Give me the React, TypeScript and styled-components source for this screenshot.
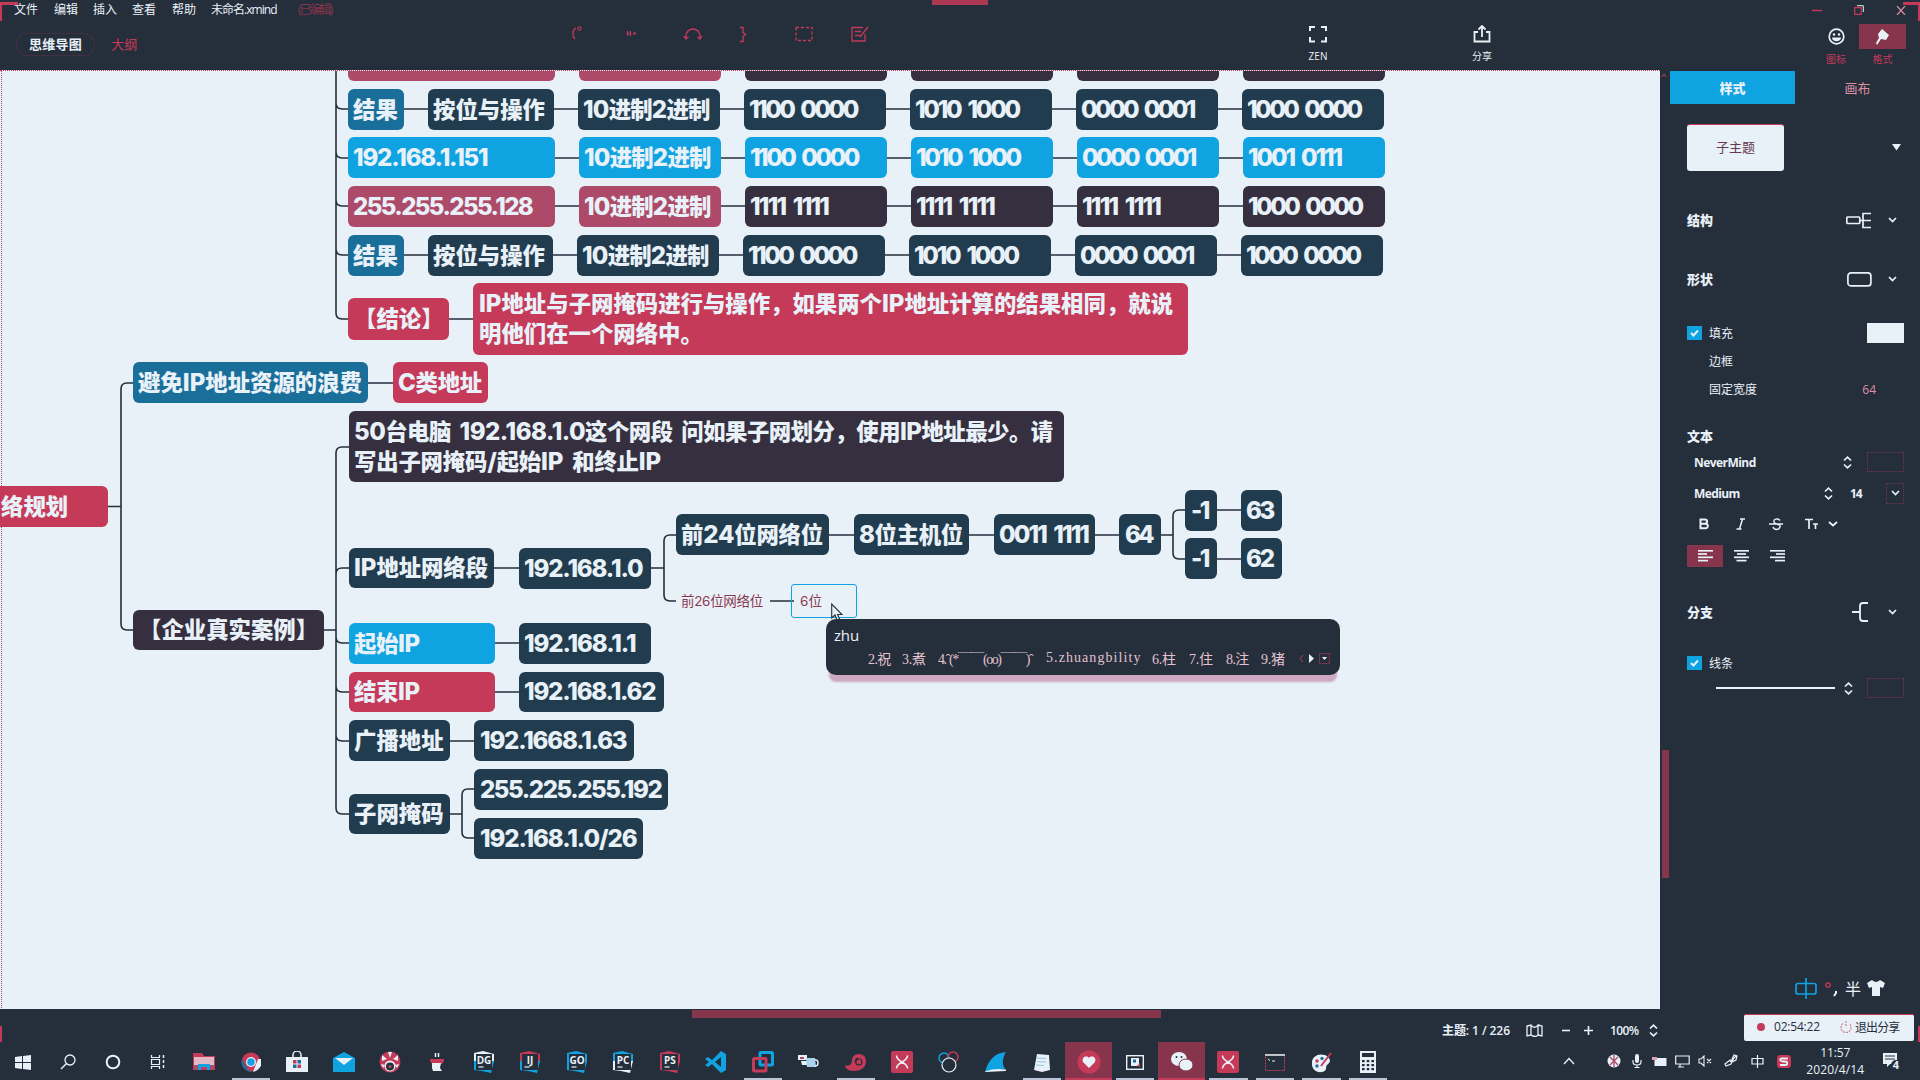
import React, { useLayoutEffect, useRef, useState } from 'react';
import styled, { createGlobalStyle } from 'styled-components';

const C = {
  dark: '#252e3b',
  light: '#e9f1f8',
  pink: '#c53a58',
  blue: '#0fa3e2',
  navy: '#223c4f',
  plum: '#362f3f',
  teal: '#1a6f9a',
  rose: '#ad4a69',
  wine: '#87354c',
};

const Global = createGlobalStyle`
  * { box-sizing: border-box; }
  html, body { margin: 0; padding: 0; background: ${C.dark}; overflow: hidden; }
  body { font-family: "Open Sans", "Noto Sans CJK SC", sans-serif; color: ${C.light}; font-size: 12px; }
  svg { display: block; flex: none; }
`;

/* ---------- text that is tracked to fill a given width ---------- */

const FitSpan = styled.span`
  display: inline-block;
  white-space: pre;
  flex: none;
`;

function Fit({ w, children }: { w?: number; children: React.ReactNode }) {
  const ref = useRef<HTMLSpanElement>(null);
  const [ls, setLs] = useState<number | undefined>(undefined);
  useLayoutEffect(() => {
    const el = ref.current;
    if (!el || !w) return;
    el.style.letterSpacing = '0px';
    const n = (el.textContent || ' ').length;
    setLs((w - el.getBoundingClientRect().width) / Math.max(1, n - 0.5));
  }, [w]);
  return (
    <FitSpan ref={ref} style={ls === undefined ? undefined : { letterSpacing: `${ls}px` }}>
      {children}
    </FitSpan>
  );
}

/* ---------- page frame ---------- */

const Page = styled.div`
  position: relative;
  width: 1920px;
  height: 1080px;
  background: ${C.dark};
  display: flex;
  flex-direction: column;
  overflow: hidden;
`;
const Corner = styled.div<{ $side: 'left' | 'right'; $top: number; $w: number; $h: number }>`
  position: absolute;
  ${p => p.$side}: 0;
  top: ${p => p.$top}px;
  width: ${p => p.$w}px;
  height: ${p => p.$h}px;
  background: ${C.pink};
`;
const ShareTab = styled.div`
  position: absolute;
  left: 932px;
  top: 0;
  width: 56px;
  height: 5px;
  background: ${C.pink};
  opacity: 0.85;
`;

/* ---------- header ---------- */

const MenuRow = styled.div`
  height: 20px;
  display: flex;
  align-items: center;
  padding-left: 14px;
  line-height: 20px;
`;
const MenuItem = styled.div<{ $w: number; $pink?: boolean }>`
  width: ${p => p.$w}px;
  color: ${p => (p.$pink ? C.pink : C.light)};
  opacity: ${p => (p.$pink ? 0.6 : 1)};
`;
const WinButtons = styled.div`
  margin-left: auto;
  display: flex;
  align-items: center;
  gap: 32px;
  padding-right: 14px;
`;
const ToolRow = styled.div`
  height: 50px;
  display: flex;
  align-items: stretch;
`;
const ViewTabs = styled.div`
  width: 544px;
  padding: 13px 0 0 16px;
  display: flex;
  align-items: flex-start;
`;
const ViewTab = styled.div<{ $on?: boolean }>`
  height: 23px;
  line-height: 20px;
  font-size: 13px;
  font-weight: ${p => (p.$on ? 600 : 400)};
  color: ${p => (p.$on ? C.light : C.pink)};
  padding: 0 12px;
  border-radius: 12px;
  border: 1px dotted ${p => (p.$on ? 'rgba(197,58,88,.4)' : 'transparent')};
  margin-right: 3px;
`;
const Tool = styled.div<{ $w: number }>`
  width: ${p => p.$w}px;
  display: flex;
  flex-direction: column;
  align-items: center;
  padding-top: 5px;
  color: ${C.pink};
`;
const ToolLabel = styled.div<{ $pink?: boolean }>`
  font-size: 10px;
  line-height: 14px;
  margin-top: 6px;
  color: ${p => (p.$pink ? C.pink : C.light)};
`;
const Space = styled.div<{ $w: number }>`
  width: ${p => p.$w}px;
  flex: none;
`;
const Mark = styled.div<{ $on?: boolean }>`
  width: 47px;
  height: 25px;
  margin-top: -1px;
  display: flex;
  align-items: center;
  justify-content: center;
  background: ${p => (p.$on ? C.wine : 'transparent')};
  color: ${C.light};
`;
const MarkLabel = styled(ToolLabel)`
  margin-top: 3px;
`;

/* ---------- body ---------- */

const Body = styled.div`
  height: 972px;
  display: flex;
`;
const Left = styled.div`
  width: 1660px;
  display: flex;
  flex-direction: column;
`;
const Canvas = styled.div`
  position: relative;
  height: 939px;
  background: ${C.light};
  overflow: hidden;
  border-top: 1px dotted ${C.pink};
`;
const Sheet = styled.div`
  position: absolute;
  left: 0;
  top: -71px;
  width: 1660px;
  height: 1010px;
`;
const Links = styled.svg`
  position: absolute;
  left: 0;
  top: 0;
`;
const Edge = styled.div`
  position: absolute;
  left: 1px;
  top: 70px;
  bottom: 0;
  border-left: 1px dotted ${C.rose};
`;
const Topic = styled.div<{ $x: number; $y: number; $w: number; $h: number; $bg: string; $pad: number }>`
  position: absolute;
  left: ${p => p.$x}px;
  top: ${p => p.$y}px;
  width: ${p => p.$w}px;
  height: ${p => p.$h}px;
  padding: 0 0 0 ${p => p.$pad}px;
  border-radius: 6px;
  background: ${p => p.$bg};
  color: ${C.light};
  font-weight: 900;
  font-size: 22.4px;
  line-height: 30px;
  display: flex;
  flex-direction: column;
  justify-content: center;
  align-items: flex-start;
  font-family: Inter, "Noto Sans CJK SC", sans-serif;
`;
const Latin = styled.span`
  font-size: 24px;
  line-height: 1;
  font-weight: 800;
  word-spacing: 4px;
`;
const PlainTopic = styled.div<{ $x: number; $y: number; $w: number; $sel?: boolean }>`
  position: absolute;
  left: ${p => p.$x}px;
  top: ${p => p.$y}px;
  width: ${p => p.$w}px;
  height: 34px;
  padding-left: ${p => (p.$sel ? 8 : 5)}px;
  line-height: 32px;
  border: 1px solid ${p => (p.$sel ? C.blue : 'transparent')};
  border-radius: 3px;
  font-size: 13.5px;
  color: #8a3850;
  font-family: Inter, "Noto Sans CJK SC", sans-serif;
`;
const Cursor = styled.svg`
  position: absolute;
  left: 831px;
  top: 603px;
`;

/* ---------- input method popup ---------- */

const Ime = styled.div`
  position: absolute;
  left: 826px;
  top: 619px;
  width: 514px;
  height: 56px;
  border-radius: 10px;
  background: ${C.dark};
  box-shadow: 0 10px 2px -3px rgba(170, 80, 125, 0.45);
  padding: 5px 8px 0;
`;
const Typed = styled.div`
  font-size: 15px;
  font-weight: 500;
  line-height: 22px;
`;
const Candidates = styled.div`
  display: flex;
  align-items: center;
  height: 24px;
  font-family: "Liberation Serif", "Noto Sans CJK SC", serif;
  font-size: 14px;
  color: #e3c3cf;
`;
const Cand = styled.div<{ $w: number }>`
  width: ${p => p.$w}px;
  flex: none;
  white-space: nowrap;
`;

/* ---------- status bar ---------- */

const Status = styled.div`
  height: 33px;
  display: flex;
  flex-direction: column;
`;
const HThumb = styled.div`
  width: 469px;
  height: 8px;
  margin: 1px 0 0 692px;
  background: ${C.wine};
`;
const StatusLine = styled.div`
  display: flex;
  align-items: center;
  height: 24px;
  padding-left: 1442px;
  font-size: 12px;
  font-weight: 600;
`;
const VScroll = styled.div`
  width: 10px;
  padding: 3px 0 0 1px;
  color: ${C.pink};
`;
const VThumb = styled.div`
  width: 7px;
  height: 128px;
  margin: 672px 0 0 1px;
  background: ${C.wine};
`;

/* ---------- sidebar ---------- */

const Side = styled.div`
  width: 250px;
  padding-top: 1px;
  display: flex;
  flex-direction: column;
`;
const SideTabs = styled.div`
  display: flex;
  height: 33px;
`;
const SideTab = styled.div<{ $on?: boolean }>`
  width: 125px;
  line-height: 34px;
  text-align: center;
  font-size: 13px;
  font-weight: ${p => (p.$on ? 800 : 400)};
  background: ${p => (p.$on ? C.blue : 'transparent')};
  color: ${p => (p.$on ? C.light : '#dd8fa2')};
`;
const Row = styled.div<{ $h: number; $mt?: number }>`
  height: ${p => p.$h}px;
  margin-top: ${p => p.$mt || 0}px;
  padding: 0 16px 0 17px;
  display: flex;
  align-items: center;
  flex: none;
`;
const Preset = styled.div`
  width: 97px;
  height: 47px;
  border-radius: 3px;
  background: ${C.light};
  border-top: 1px solid ${C.pink};
  color: #66384c;
  font-size: 13px;
  line-height: 44px;
  text-align: center;
`;
const Head = styled.div`
  font-size: 13px;
  font-weight: 800;
  width: 159px;
  margin-top: -2px;
`;
const Check = styled.div<{ $on?: boolean }>`
  width: 15px;
  height: 14px;
  margin-right: 7px;
  background: ${p => (p.$on ? C.blue : 'transparent')};
  display: flex;
  align-items: center;
  justify-content: center;
`;
const Swatch = styled.div<{ $w: number; $h: number; $fill?: boolean }>`
  width: ${p => p.$w}px;
  height: ${p => p.$h}px;
  margin-left: auto;
  background: ${p => (p.$fill ? C.light : 'transparent')};
  border: 1px dotted ${p => (p.$fill ? C.light : 'rgba(197,58,88,.55)')};
  display: flex;
  align-items: center;
  justify-content: center;
`;
const FontName = styled.div<{ $w: number }>`
  width: ${p => p.$w}px;
  margin-left: 7px;
  font-weight: 700;
  font-size: 12px;
`;
const Value = styled.div`
  color: #dd8fa2;
  margin-left: auto;
  margin-right: 28px;
`;
const AlignBox = styled.div<{ $on?: boolean }>`
  width: 36px;
  height: 22px;
  display: flex;
  align-items: center;
  justify-content: center;
  background: ${p => (p.$on ? C.wine : 'transparent')};
`;
const Stroke = styled.div`
  width: 119px;
  height: 2px;
  margin: 0 9px 0 29px;
  background: ${C.light};
`;
const ImeBar = styled.div`
  margin-top: 274px;
  height: 32px;
  padding-left: 125px;
  display: flex;
  align-items: center;
  font-size: 16px;
`;
const ShareBox = styled.div`
  width: 170px;
  height: 27px;
  margin: 10px 0 0 74px;
  background: ${C.light};
  border-top: 1px solid ${C.pink};
  border-radius: 2px;
  color: ${C.dark};
  display: flex;
  align-items: center;
  padding: 0 0 3px 13px;
  font-size: 12px;
`;
const Dot = styled.div`
  width: 8px;
  height: 8px;
  border-radius: 50%;
  background: ${C.pink};
  margin-right: 9px;
`;

/* ---------- taskbar ---------- */

const Taskbar = styled.div`
  height: 38px;
  display: flex;
`;
const Slot = styled.div<{ $w: number; $on?: boolean; $line?: boolean }>`
  width: ${p => p.$w}px;
  height: 38px;
  flex: none;
  display: flex;
  align-items: center;
  justify-content: center;
  position: relative;
  padding-top: 2px;
  background: ${p => (p.$on ? C.wine : 'transparent')};
  &::after {
    content: '';
    position: absolute;
    left: ${p => (p.$on ? 0 : 4)}px;
    right: ${p => (p.$on ? 0 : 4)}px;
    bottom: 0;
    height: 2px;
    background: ${p => (p.$on ? C.pink : p.$line ? '#b9c4d6' : 'transparent')};
  }
`;
const Tray = styled.div`
  display: flex;
  align-items: center;
  margin-left: 167px;
`;
const TrayCell = styled.div<{ $w: number }>`
  width: ${p => p.$w}px;
  display: flex;
  justify-content: center;
`;
const Clock = styled.div`
  width: 74px;
  text-align: center;
  line-height: 17px;
  font-size: 12px;
`;

/* ---------- small drawings ---------- */

const P = (p: { d: string; w?: number; c?: string; f?: string; dash?: string }) => (
  <path d={p.d} fill={p.f || 'none'} stroke={p.c || 'currentColor'} strokeWidth={p.w ?? 1.5} strokeDasharray={p.dash} />
);
const Svg = ({ w, h, children }: { w: number; h: number; children: React.ReactNode }) => (
  <svg width={w} height={h} viewBox={`0 0 ${w} ${h}`}>{children}</svg>
);
const Chevron = () => <Svg w={9} h={6}><P d="M1 1l3.500 3.500L8 1" w={1.700} /></Svg>;
const UpDown = () => <Svg w={9} h={13}><P d="M1 4.500L4.500 1.200 8 4.500M1 8.500l3.500 3.300L8 8.500" w={1.700} /></Svg>;
const Tick = () => <Svg w={9} h={8}><P d="M1 4l2.500 2.500L8 1.500" w={2} c={C.light} /></Svg>;
const AlignIcon = ({ k }: { k: number }) => (
  <Svg w={15} h={12}>
    {[[15, 0.8], [9, 4], [15, 7.3], [10, 10.6]].map(([len, y], i) => {
      const x = k === 0 ? 0 : k === 1 ? (15 - len) / 2 : 15 - len;
      return <P key={i} d={`M${x} ${y}h${len}`} c={C.light} w={1.700} />;
    })}
  </Svg>
);
const JetBrains = ({ t, a, b }: { t: string; a: string; b: string }) => (
  <Svg w={22} h={22}>
    <path d="M1 2l9-2 11 3v8H1z" fill={a} />
    <path d="M1 10h20l-3 12-9-2-8-1z" fill={b} />
    <rect x="3" y="3" width="16" height="16" fill={C.dark} />
    <text x="11" y="12.500" fontSize="10" fontWeight="700" textAnchor="middle" fill={C.light} fontFamily="Open Sans, sans-serif">{t}</text>
    <path d="M5.500 16h5" stroke={C.light} strokeWidth="1.200" />
  </Svg>
);
const XTile = () => (
  <Svg w={22} h={22}><rect width="22" height="22" rx="2" fill={C.pink} /><P d="M5.500 4.500q0 3.500 5.500 6.500 5.500-3 5.500-6.500M5.500 17.500q0-3.500 5.500-6.500 5.500 3 5.500 6.500" c={C.light} w={1.600} /></Svg>
);

const PITCH = 46.55;
type TaskIcon = { w: number; on?: boolean; line?: boolean; icon: React.ReactNode };
const tasks: TaskIcon[] = [
  { w: 45, icon: <Svg w={16} h={15}><path d="M0 2l7-1v6H0zM8 1l8-1v7H8zM0 8h7v6l-7-1zM8 8h8v7l-8-1z" fill={C.light} /></Svg> },
  { w: 45, icon: <Svg w={16} h={16}><circle cx="10" cy="6" r="5" fill="none" stroke={C.light} strokeWidth="1.300" /><P d="M6.500 9.500L1 15" c={C.light} /></Svg> },
  { w: 45, icon: <Svg w={16} h={16}><circle cx="8" cy="8" r="6.300" fill="none" stroke={C.light} strokeWidth="2" /></Svg> },
  { w: 46, icon: <Svg w={16} h={16}><P d="M1.500 1v2.500h8V1M1.500 5.500h8v5h-8zM1.500 15v-2.500h8V15" c={C.light} w={1.200} /><P d="M13.500 1v14" c={C.light} dash="3 2" /></Svg> },
  { w: PITCH, icon: <Svg w={22} h={18}><path d="M0 0h9l2 3h11v14H0z" fill={C.pink} /><path d="M1 4h20v8H1z" fill="#e0b8c6" /><path d="M1 12h4v5H1zM17 12h4v5h-4z" fill={C.rose} /><path d="M5 17v-6h12v6h-3v-3H8v3z" fill={C.blue} /></Svg> },
  { w: PITCH, line: true, icon: <Svg w={20} h={20}><circle cx="10" cy="10" r="9.500" fill={C.pink} /><path d="M1 7l6 11 4 2A10 10 0 0 1 1 7z" fill={C.teal} /><path d="M12 20l5-13h3a10 10 0 0 1-8 13z" fill={C.light} /><circle cx="10" cy="10" r="5" fill={C.light} /><circle cx="10" cy="10" r="3.700" fill={C.blue} /></Svg> },
  { w: PITCH, icon: <Svg w={22} h={22}><path d="M0 6h22v15H0z" fill={C.light} /><P d="M7 6V4a4 4 0 0 1 8 0v2" c={C.light} /><path d="M7 9h3.500v3.500H7zM11.500 13.500H15V17h-3.500z" fill={C.pink} /><path d="M11.500 9H15v3.500h-3.500zM7 13.500h3.500V17H7z" fill={C.teal} /></Svg> },
  { w: PITCH, icon: <Svg w={22} h={21}><path d="M0 6l11-6 11 6v14H0z" fill={C.blue} /><path d="M2 6h18l-9 7z" fill={C.light} /></Svg> },
  { w: PITCH, icon: <Svg w={22} h={22}><circle cx="11" cy="11" r="10.500" fill={C.pink} /><path d="M3 4l5 4-5 2zM19 4l-5 4 5 2zM9 1l2 6 2-6zM2 13l4 1-2 3zM20 13l-4 1 2 3z" fill={C.light} /><circle cx="11" cy="15" r="5.500" fill={C.light} /><circle cx="11" cy="15.500" r="4" fill={C.dark} /><circle cx="11" cy="15.500" r="1.500" fill={C.rose} /></Svg> },
  { w: PITCH, icon: <Svg w={16} h={20}><P d="M6.500 1v4M9.500 1v4" c={C.light} w={1.500} /><path d="M1 7h14v2l-2 3H3L1 9z" fill={C.pink} /><path d="M3 11h9l-1 5 2 3H4l-1-3z" fill={C.light} /></Svg> },
  { w: PITCH, icon: <JetBrains t="DG" a={C.light} b={C.blue} /> },
  { w: PITCH, icon: <JetBrains t="IJ" a={C.pink} b={C.blue} /> },
  { w: PITCH, icon: <JetBrains t="GO" a={C.blue} b={C.blue} /> },
  { w: PITCH, icon: <JetBrains t="PC" a={C.blue} b={C.light} /> },
  { w: PITCH, icon: <JetBrains t="PS" a={C.pink} b={C.pink} /> },
  { w: PITCH, icon: <Svg w={22} h={22}><path d="M16 0l5 3v16l-5 3L7 13l-4 3-3-2 4-3-4-3 3-2 4 3zM16 6l-6 5 6 5z" fill={C.blue} fillRule="evenodd" /></Svg> },
  { w: PITCH, line: true, icon: <Svg w={22} h={22}><rect x="8" y="1.500" width="12.500" height="12.500" rx="1" fill="none" stroke={C.blue} strokeWidth="3" /><rect x="1.500" y="7.500" width="12.500" height="12.500" rx="1" fill="none" stroke={C.pink} strokeWidth="3" /></Svg> },
  { w: PITCH, icon: <Svg w={22} h={14}><path d="M0 0h9v5H0zM3 6h6v4H4z" fill={C.light} /><path d="M8 3h9l1 9H9z" fill="#a9d4ef" /><P d="M17 5c4-1 4 6 0 6" c={C.light} /><path d="M2 2h4v2H2z" fill={C.rose} /></Svg> },
  { w: PITCH, line: true, icon: <Svg w={22} h={19}><path d="M0 12c4 2 7-1 7-5a7 6 0 0 1 13-3c3 7-1 14-11 14-6 0-9-3-9-6z" fill={C.pink} /><P d="M11 9a3 3 0 1 1 3 3c-4 0-5-6-1-7" c={C.dark} w={1.200} /></Svg> },
  { w: PITCH, icon: <XTile /> },
  { w: PITCH, icon: <Svg w={22} h={22}><circle cx="6" cy="7" r="5" fill="none" stroke={C.blue} strokeWidth="1.500" /><circle cx="15" cy="6" r="5" fill="none" stroke={C.pink} strokeWidth="1.500" /><circle cx="11" cy="14" r="7" fill={C.dark} stroke={C.light} strokeWidth="1.200" /></Svg> },
  { w: PITCH, icon: <Svg w={22} h={20}><path d="M0 20C3 8 10 1 21 0c-4 6-4 13-1 17z" fill={C.blue} /><path d="M0 19.500c7-3 14-3 21-2v1.500l-21 1z" fill={C.light} /></Svg> },
  { w: PITCH, line: true, icon: <Svg w={18} h={19}><path d="M4 1l12 1 1 15-8 2-8-2z" fill={C.light} /><P d="M4 5l9 .5M4 8.500l9 .5M3 12l8 .5" c="#8fc8e8" w={1.200} /></Svg> },
  { w: PITCH, on: true, icon: <Svg w={24} h={24}><circle cx="12" cy="12" r="11.500" fill={C.pink} /><path d="M12 18l-6-6c-2-5 4-7 6-4 2-3 8-1 6 4z" fill={C.light} /></Svg> },
  { w: PITCH, line: true, icon: <Svg w={18} h={15}><rect x=".7" y=".7" width="16.600" height="13.600" fill="none" stroke={C.light} strokeWidth="1.400" /><path d="M5 3h8v8H5z" fill={C.light} /><path d="M7 4.500h3v3H7z" fill={C.teal} /><path d="M11 11l3-3v4z" fill={C.pink} /></Svg> },
  { w: PITCH, on: true, icon: <Svg w={22} h={20}><ellipse cx="8" cy="7" rx="8" ry="7" fill={C.light} /><ellipse cx="15" cy="13" rx="7" ry="6" fill={C.light} stroke={C.wine} /><circle cx="5.500" cy="5" r="1" fill={C.dark} /><circle cx="10.500" cy="5" r="1" fill={C.dark} /></Svg> },
  { w: PITCH, line: true, icon: <XTile /> },
  { w: PITCH, line: true, icon: <Svg w={20} h={17}><rect x=".5" y=".5" width="19" height="16" fill="none" stroke={C.pink} strokeDasharray="2 1" /><P d="M0 1h20" c={C.light} /><P d="M3 5l2 1.500M7 7h3" c={C.light} w={1} /></Svg> },
  { w: PITCH, line: true, icon: <Svg w={21} h={21}><path d="M1 12C0 3 11 0 17 5c4 4 1 6-1 8s1 6-5 7S1 17 1 12z" fill={C.light} /><circle cx="6" cy="9" r="1.700" fill={C.pink} /><circle cx="11" cy="6.500" r="1.700" fill={C.teal} /><circle cx="6" cy="14" r="1.700" fill={C.teal} /><P d="M10 14L20 1" c={C.pink} w={2} /></Svg> },
  { w: PITCH, line: true, icon: <Svg w={16} h={22}><rect width="16" height="22" fill={C.light} /><path d="M2 2h12v4H2z" fill={C.dark} />{[9, 13, 17].map(y => [2, 6.7, 11.4].map(x => <rect key={`${x}-${y}`} x={x} y={y} width="2.600" height="2.200" fill={C.dark} />))}</Svg> },
];

/* ---------- mind map data ---------- */

type T = [x: number, y: number, w: number, h: number, bg: string, lines: [string, number?][], pad?: number];

const cells = (y: number, dx: number, bg: string, v: [string, number][]): T[] =>
  v.map(([t, w], i) => [744 + dx + i * 166, y, 142, 41, bg, [[t, w]], 5] as T);

const topics: T[] = [
  [348, 40, 207, 41, C.rose, []],
  [579, 40, 142, 41, C.rose, []],
  ...cells(40, 1, C.plum, [['', 0], ['', 0], ['', 0], ['', 0]]),
  [348, 89, 56, 41, C.teal, [['结果']], 5],
  [428, 89, 126, 41, C.navy, [['按位与操作']], 5],
  [578, 89, 142, 41, C.navy, [['10进制2进制', 127]], 5],
  ...cells(89, 0, C.navy, [['1100 0000', 109], ['1010 1000', 105], ['0000 0001', 114], ['1000 0000', 115]]),
  [348, 137, 207, 41, C.blue, [['192.168.1.151', 135]], 5],
  [579, 137, 142, 41, C.blue, [['10进制2进制', 127]], 5],
  ...cells(137, 1, C.blue, [['1100 0000', 109], ['1010 1000', 105], ['0000 0001', 114], ['1001 0111', 94]]),
  [348, 186, 207, 41, C.rose, [['255.255.255.128', 180]], 5],
  [579, 186, 142, 41, C.rose, [['10进制2进制', 127]], 5],
  ...cells(186, 1, C.plum, [['1111 1111', 79], ['1111 1111', 79], ['1111 1111', 79], ['1000 0000', 115]]),
  [348, 235, 56, 41, C.teal, [['结果']], 5],
  [428, 235, 125, 41, C.navy, [['按位与操作']], 5],
  [577, 235, 142, 41, C.navy, [['10进制2进制', 127]], 5],
  ...cells(235, -1, C.navy, [['1100 0000', 109], ['1010 1000', 105], ['0000 0001', 114], ['1000 0000', 115]]),
  [348, 298, 101, 42, C.pink, [['【结论】']]],
  [473, 283, 715, 72, C.pink, [['IP地址与子网掩码进行与操作，如果两个IP地址计算的结果相同，就说', 694], ['明他们在一个网络中。']]],
  [-60, 486, 168, 41, C.pink, [['络规划']], 61],
  [133, 362, 235, 41, C.teal, [['避免IP地址资源的浪费', 224]], 5],
  [393, 362, 95, 41, C.pink, [['C类地址', 84]], 5],
  [133, 610, 191, 40, C.plum, [['【企业真实案例】']]],
  [349, 411, 715, 71, C.plum, [['50台电脑 192.168.1.0这个网段 问如果子网划分，使用IP地址最少。请', 699], ['写出子网掩码/起始IP 和终止IP', 307]], 5],
  [349, 548, 145, 40, C.navy, [['IP地址网络段', 134]], 5],
  [519, 548, 132, 41, C.navy, [['192.168.1.0', 119]], 5],
  [676, 514, 153, 41, C.navy, [['前24位网络位', 142]], 5],
  [854, 514, 115, 41, C.navy, [['8位主机位', 104]], 5],
  [994, 514, 101, 41, C.navy, [['0011 1111', 90]], 5],
  [1119, 514, 42, 41, C.navy, [['64', 28]]],
  [1185, 490, 32, 41, C.navy, [['-1', 18]]],
  [1241, 490, 41, 41, C.navy, [['63', 28]], 5],
  [1185, 538, 32, 41, C.navy, [['-1', 18]]],
  [1241, 538, 41, 41, C.navy, [['62', 28]], 5],
  [349, 623, 146, 41, C.blue, [['起始IP', 66]], 5],
  [349, 672, 146, 40, C.pink, [['结束IP', 66]], 5],
  [349, 720, 101, 41, C.navy, [['广播地址']], 5],
  [349, 794, 101, 40, C.navy, [['子网掩码']], 5],
  [519, 623, 132, 41, C.navy, [['192.168.1.1', 112]], 5],
  [519, 672, 145, 40, C.navy, [['192.168.1.62', 132]], 5],
  [474, 720, 160, 41, C.navy, [['192.1668.1.63', 147]]],
  [474, 769, 194, 41, C.navy, [['255.225.255.192', 182]]],
  [474, 818, 169, 41, C.navy, [['192.168.1.0/26', 157]]],
];

const rich = (s: string) =>
  s.split(/([\x20-\x7e]+)/).filter(Boolean).map((part, i) => (/[\x20-\x7e]/.test(part) ? <Latin key={i}>{part}</Latin> : part));

const branch = (x: number, from: number, to: number, end: number) => {
  const r = to > from ? -6 : 6;
  return `M${x} ${from}V${to + r}Q${x} ${to} ${x + 6} ${to}H${end}`;
};
const rowLinks = [70, 109, 158, 206, 255].map((y, i) => {
  const start = i === 1 || i === 4 ? 404 : 555;
  return `M${start} ${y}H1245`;
}).join('');
const linkPath = [
  rowLinks,
  ...[109, 158, 206, 255, 319].map(y => branch(336, 70, y, 348)),
  'M449 319H473M108 506.500H121M368 383H393M324 630H336M494 568H519M651 568H664M829 535H1119M1161 535H1173M1217 510H1241M1217 559H1241',
  'M495 643H519M495 692H519M450 741H474M450 814H462M770 601H794',
  branch(121, 506, 383, 133), branch(121, 506, 630, 133),
  ...[447, 568, 643, 692, 741, 814].map(y => branch(336, 630, y, 349)),
  branch(664, 568, 535, 676), branch(664, 568, 601, 676),
  branch(1173, 535, 510, 1185), branch(1173, 535, 559, 1185),
  branch(462, 814, 789, 474), branch(462, 814, 838, 474),
].join('');

const candidates: [string, number, number][] = [
  ['2.祝', 23, 34], ['3.煮', 24, 36], ['4.ˆ(*￣￣(oo)￣￣)ˆ', 95, 108], ['5.zhuangbility', 95, 106],
  ['6.柱', 24, 37], ['7.住', 24, 37], ['8.注', 23, 35], ['9.猪', 24, 38],
];

const menu: [string, number][] = [['文件', 40], ['编辑', 39], ['插入', 39], ['查看', 40], ['帮助', 39]];

export default function App() {
  return (
    <Page>
      <Global />
      <MenuRow>
        {menu.map(([t, w]) => <MenuItem key={t} $w={w}>{t}</MenuItem>)}
        <MenuItem $w={87}><Fit w={66}>未命名.xmind</Fit></MenuItem>
        <MenuItem $w={60} $pink><Fit w={34}>(已编辑)</Fit></MenuItem>
        <WinButtons>
          <Svg w={10} h={10}><P d="M0 5.500h10" c={C.pink} /></Svg>
          <Svg w={10} h={10}><P d="M.7 2.700h6.500v6.600H.7z" c={C.pink} w={1.200} /><P d="M3 .7h6.300V7" c={C.light} w={1} /></Svg>
          <Svg w={10} h={9}><P d="M1 0l8 9M9 0L1 9" c="#dd8fa2" w={1.200} /></Svg>
        </WinButtons>
      </MenuRow>
      <ToolRow>
        <ViewTabs>
          <ViewTab $on><Fit w={53}>思维导图</Fit></ViewTab>
          <ViewTab>大纲</ViewTab>
        </ViewTabs>
        <Tool $w={68}><Svg w={18} h={18}><P d="M7 3c-4 2-4 8-1 11" w={1.300} /><P d="M9 2h3v3H9z" w={1} /></Svg></Tool>
        <Tool $w={40}><Svg w={18} h={18}><P d="M4.500 6v5M7.500 6v5M4.500 8.500h3M10 9.500l1.500-2 1.500 2" w={1.200} /></Svg></Tool>
        <Tool $w={82}><Svg w={20} h={18}><P d="M3 13V11a7 7 0 0 1 14 0v2M1 11l2 3 2.500-2M19 11l-2 3-2.500-2" w={1.300} /></Svg></Tool>
        <Tool $w={18}><Svg w={10} h={18}><P d="M2 2.500h3v5l2.500 2-2.500 2v5H2" w={1.300} /></Svg></Tool>
        <Tool $w={104}><Svg w={18} h={18}><P d="M1 2.500h16v13H1z" dash="3 2" w={1.300} /></Svg></Tool>
        <Tool $w={8}><Svg w={18} h={18}><P d="M12 2.500H1v13.500h13V9M4 6.500h6M4 10.500h5M9 12l8-10" w={1.300} /></Svg></Tool>
        <Space $w={424} />
        <Tool $w={60}>
          <Svg w={18} h={18}><P d="M1 6V2h5M12 2h5v4M17 12v4.500h-5M6 16.500H1V12" c={C.light} w={2} /></Svg>
          <ToolLabel><Fit w={19}>ZEN</Fit></ToolLabel>
        </Tool>
        <Space $w={104} />
        <Tool $w={60}>
          <Svg w={18} h={18}><P d="M5 7H1.500v9.500h15V7H13M9 12V1M5.500 4.500L9 1l3.500 3.500" c={C.light} w={1.800} /></Svg>
          <ToolLabel>分享</ToolLabel>
        </Tool>
        <Space $w={301} />
        <Tool $w={46}>
          <Mark><Svg w={17} h={17}><circle cx="8.500" cy="8.500" r="7.300" fill="none" stroke={C.light} strokeWidth="1.700" /><path d="M4 9.500h9c0 5-9 5-9 0z" fill={C.light} /><circle cx="6" cy="6.500" r="1.200" fill={C.light} /><circle cx="11" cy="6.500" r="1.200" fill={C.light} /></Svg></Mark>
          <MarkLabel $pink>图标</MarkLabel>
        </Tool>
        <Tool $w={47}>
          <Mark $on><Svg w={15} h={17}><path d="M7 1l7 6-3 5-5-1-4 6-1-2 3-5-1-4z" fill={C.light} /></Svg></Mark>
          <MarkLabel $pink>格式</MarkLabel>
        </Tool>
      </ToolRow>

      <Body>
        <Left>
          <Canvas>
            <Sheet>
              <Edge />
              <Links width="1660" height="1010"><path d={linkPath} fill="none" stroke={C.dark} strokeWidth="1.600" /></Links>
              {topics.map(([x, y, w, h, bg, lines, pad], i) => (
                <Topic key={i} $x={x} $y={y} $w={w} $h={h} $bg={bg} $pad={pad ?? 6}>
                  {lines.filter(l => l[0]).map(([t, tw]) => <Fit key={t} w={tw}>{rich(t)}</Fit>)}
                </Topic>
              ))}
              <PlainTopic $x={675} $y={584} $w={95}><Fit w={82}>前26位网络位</Fit></PlainTopic>
              <PlainTopic $x={791} $y={584} $w={66} $sel><Fit w={22}>6位</Fit></PlainTopic>
              <Cursor width="12" height="19" viewBox="0 0 12 19"><path d="M.7 1v14l3.300-3 2.500 6 2.500-1-2.500-5.500H11z" fill={C.light} stroke={C.dark} strokeWidth="1.100" /></Cursor>
              <Ime>
                <Typed><Fit w={25}>zhu</Fit></Typed>
                <Candidates>
                  <Space $w={34} />
                  {candidates.map(([t, w, cw]) => <Cand key={t} $w={cw}><Fit w={w}>{t}</Fit></Cand>)}
                  <Svg w={32} h={11}>
                    <P d="M4 2L1 5.500 4 9" c={C.pink} w={1} />
                    <path d="M10 1l5 4.500-5 4.500z" fill={C.light} />
                    <rect x="20.500" y=".5" width="10" height="10" fill="none" stroke={C.pink} strokeDasharray="1 1" />
                    <path d="M23 4h5l-2.500 3z" fill={C.light} />
                  </Svg>
                </Candidates>
              </Ime>
            </Sheet>
          </Canvas>
          <Status>
            <HThumb />
            <StatusLine>
              <Fit w={68}>主题: 1 / 226</Fit><Space $w={16} />
              <Svg w={17} h={13}><P d="M1 2l4-1v10l-4 1zM5 1c2 3 5 3 7 0v10c-2 3-5 1-7 0M12 1l4 1v10l-4-1" c={C.light} w={1.300} /></Svg><Space $w={19} />
              <Svg w={8} h={9}><P d="M0 4.500h8" c={C.light} w={1.600} /></Svg><Space $w={14} />
              <Svg w={9} h={9}><P d="M0 4.500h9M4.500 0v9" c={C.light} w={1.600} /></Svg><Space $w={17} />
              <Fit w={29}>100%</Fit><Space $w={10} /><UpDown />
            </StatusLine>
          </Status>
        </Left>
        <VScroll>
          <Svg w={6} h={5}><P d="M1 4l2-3 2 3" w={1} /></Svg>
          <VThumb />
        </VScroll>
        <Side>
          <SideTabs><SideTab $on>样式</SideTab><SideTab>画布</SideTab></SideTabs>
          <Row $h={87}><Preset><Fit w={39}>子主题</Fit></Preset><Space $w={108} /><Svg w={9} h={7}><path d="M0 0h9L4.500 6.500z" fill={C.light} /></Svg></Row>
          <Row $h={58}><Head>结构</Head>
            <Svg w={25} h={17}><rect x=".8" y="5" width="13" height="6.500" rx="1" fill="none" stroke={C.light} strokeWidth="1.700" /><P d="M14 8.500h11M25 1.500h-8v14h8" c={C.light} w={1.700} /></Svg>
            <Space $w={17} /><Chevron />
          </Row>
          <Row $h={60}><Head>形状</Head>
            <Space $w={1} /><Svg w={25} h={15}><rect x=".9" y=".9" width="23" height="13" rx="3" fill="none" stroke={C.light} strokeWidth="1.700" /></Svg>
            <Space $w={16} /><Chevron />
          </Row>
          <Row $h={28} $mt={10}><Check $on><Tick /></Check>填充<Swatch $w={37} $h={20} $fill /></Row>
          <Row $h={28}><Check />边框</Row>
          <Row $h={28}><Check />固定宽度<Value>64</Value></Row>
          <Row $h={28} $mt={19}><Head>文本</Head></Row>
          <Row $h={24}><FontName $w={149}><Fit w={62}>NeverMind</Fit></FontName><UpDown /><Swatch $w={37} $h={20} /></Row>
          <Row $h={28} $mt={5}>
            <FontName $w={130}><Fit w={46}>Medium</Fit></FontName><UpDown /><Space $w={10} /><FontName $w={14}><Fit w={12}>14</Fit></FontName>
            <Swatch $w={18} $h={21}><Chevron /></Swatch>
          </Row>
          <Row $h={28} $mt={3}>
            <Svg w={152} h={14}>
              <P d="M13.500 2.500h4.500a2.100 2.100 0 0 1 0 4.200H13.500zM13.500 6.700h5a2.300 2.300 0 0 1 0 4.600H13.500z" c={C.light} w={2} />
              <P d="M53 2h5M49.500 12h5M55.500 2l-3 10" c={C.light} />
              <P d="M93 3.500c-2-2.500-7-1.500-6 1.500s7 1.500 6 5-6 3-7 0M82 7h14" c={C.light} w={1.400} />
              <P d="M118 2.500h8M122 2.500V12M126 7h5M128.500 7v5" c={C.light} w={1.700} />
              <P d="M142 5l4 3.500 4-3.500" c={C.light} w={1.700} />
            </Svg>
          </Row>
          <Row $h={28} $mt={4}>{[0, 1, 2].map(k => <AlignBox key={k} $on={k === 0}><AlignIcon k={k} /></AlignBox>)}</Row>
          <Row $h={28} $mt={28}><Head>分支</Head>
            <Space $w={6} /><Svg w={16} h={20}><P d="M0 10h8M16 1h-5q-3 0-3 3v12q0 3 3 3h5" c={C.light} w={1.800} /></Svg>
            <Space $w={20} /><Chevron />
          </Row>
          <Row $h={28} $mt={23}><Check $on><Tick /></Check>线条</Row>
          <Row $h={20} $mt={1}><Stroke /><UpDown /><Swatch $w={37} $h={20} /></Row>
          <ImeBar>
            <Svg w={22} h={21}><rect x="1" y="5.500" width="20" height="10.500" rx="2" fill="none" stroke={C.blue} strokeWidth="1.700" /><P d="M11 0v21" c={C.blue} w={1.700} /></Svg>
            <Space $w={8} />
            <Svg w={13} h={17}><circle cx="3" cy="5" r="2.200" fill="none" stroke={C.pink} strokeWidth="1.300" /><P d="M11 11v2l-2 3" c={C.light} w={2} /></Svg>
            <Space $w={7} />半<Space $w={6} />
            <Svg w={18} h={16}><path d="M5 0q4 4 8 0l5 3-2 5-3-1v9H5V7L2 8 0 3z" fill={C.light} /></Svg>
          </ImeBar>
          <ShareBox>
            <Dot /><Fit w={46}>02:54:22</Fit><Space $w={20} />
            <Svg w={12} h={12}><P d="M3 2.500a5 5 0 1 0 6 0M6 0v6" c="#d27c90" w={1.200} dash="2 1" /></Svg>
            <Space $w={3} /><Fit w={45}>退出分享</Fit>
          </ShareBox>
        </Side>
      </Body>

      <Taskbar>
        {tasks.map((t, i) => <Slot key={i} $w={t.w} $on={t.on} $line={t.line}>{t.icon}</Slot>)}
        <Tray>
          <TrayCell $w={22}><Svg w={12} h={8}><P d="M1 7l5-5.500L11 7" c={C.light} w={1.300} /></Svg></TrayCell>
          <Space $w={23} />
          <TrayCell $w={22}><Svg w={14} h={14}><circle cx="7" cy="7" r="6.500" fill={C.light} /><P d="M3 3l8 8M11 3l-8 8M7 1v12" c={C.rose} w={1.300} /></Svg></TrayCell>
          <TrayCell $w={23}><Svg w={10} h={14}><rect x="3" width="4" height="9" rx="2" fill={C.light} /><P d="M1 6v2a4 3 0 0 0 8 0V6M5 11v3M2.500 13.500h5" c={C.light} w={1.200} /></Svg></TrayCell>
          <TrayCell $w={23}><Svg w={15} h={11}><rect x="3" y="2.500" width="11" height="7" fill={C.light} stroke={C.light} /><path d="M0 1h5v3H0z" fill="#d9a5b5" /></Svg></TrayCell>
          <TrayCell $w={23}><Svg w={15} h={13}><P d="M.7 1h13.500v8H.7zM3 12h6M5 9v3" c={C.light} w={1.200} /></Svg></TrayCell>
          <TrayCell $w={22}><Svg w={14} h={12}><P d="M1 4h2l3-3v10L3 8H1zM9 4l4 4M13 4L9 8" c={C.light} w={1.100} /></Svg></TrayCell>
          <TrayCell $w={30}><Svg w={14} h={14}><P d="M6 8l6-6M2 12l5-2 2-4-3 0-5 4zM8 5l2-4 3 1-1 4-4 2" c={C.light} w={1.200} /></Svg></TrayCell>
          <TrayCell $w={23}><Svg w={13} h={13}><P d="M1 3.500h11v5.500H1zM6.500 0v13" c={C.light} w={1.200} /></Svg></TrayCell>
          <TrayCell $w={29}><Svg w={14} h={13}><rect width="14" height="13" rx="3" fill={C.pink} /><P d="M11 3.500H5c-3 0-2 3 1 3h2c3 0 3 3.500 0 3.500H3" c={C.light} w={1.800} /></Svg></TrayCell>
          <Clock><Fit w={30}>11:57</Fit><br /><Fit w={58}>2020/4/14</Fit></Clock>
          <Space $w={10} />
          <Svg w={19} h={20}><path d="M1 2h14v11H8l-3 3v-3H1z" fill={C.light} /><P d="M3 5h10M3 8h10" c={C.dark} w={1} /><circle cx="14" cy="14" r="5" fill={C.dark} /><text x="14" y="18" fontSize="11" fontWeight="700" textAnchor="middle" fill={C.light} fontFamily="Open Sans, sans-serif">4</text></Svg>
        </Tray>
      </Taskbar>

      <ShareTab />
      <Corner $side="left" $top={2} $w={18} $h={3} />
      <Corner $side="left" $top={5} $w={2} $h={16} />
      <Corner $side="right" $top={2} $w={17} $h={3} />
      <Corner $side="right" $top={5} $w={2} $h={16} />
      <Corner $side="left" $top={1026} $w={2} $h={16} />
      <Corner $side="right" $top={1026} $w={2} $h={16} />
    </Page>
  );
}
